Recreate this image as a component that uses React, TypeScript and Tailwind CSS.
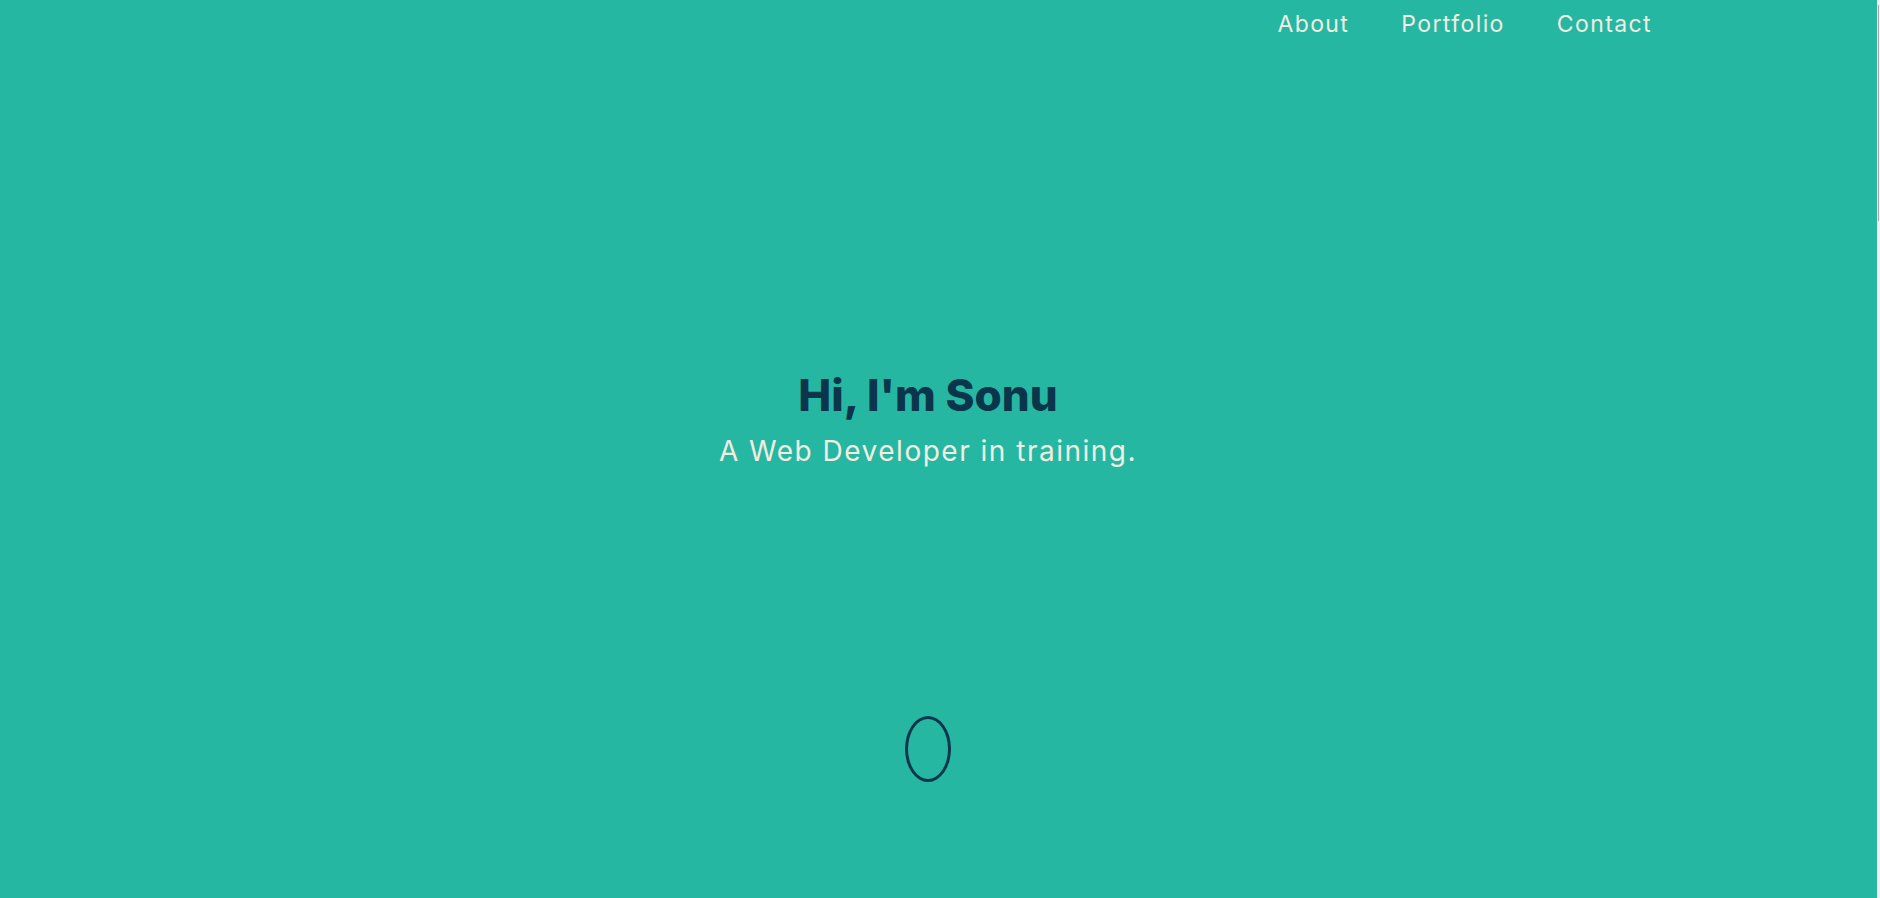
import React from "react";

export default function App() {
  const font = { fontFamily: "Inter, 'Noto Sans', sans-serif" };
  return (
    <div className="flex h-[898px] w-full overflow-hidden" style={font}>
      <div className="flex flex-1 flex-col bg-[#26b7a3]">
        <nav className="flex h-[48px] items-center justify-end gap-[52px] pr-[225px] text-[23px] tracking-[1.4px] text-[#f1ede0]">
          <a>About</a>
          <a>Portfolio</a>
          <a>Contact</a>
        </nav>
        <section className="flex flex-col items-center pr-[21px] pt-[321px]">
          <h1 className="text-[44px] font-extrabold leading-[52px] text-[#0a354a]">Hi, I'm Sonu</h1>
          <p className="mt-[10px] text-[28px] leading-[40px] tracking-[1.5px] text-[#f1ede0]">A Web Developer in training.</p>
          <div className="mt-[245px] h-[66px] w-[46px] rounded-[50%] border-[3px] border-[#0a354a]"></div>
        </section>
      </div>
      <div className="relative w-[3px] bg-[#f1f1f1]">
        <div className="absolute left-[1px] top-[5px] h-[216px] w-[1px] bg-[#a8a8a8]"></div>
      </div>
    </div>
  );
}
